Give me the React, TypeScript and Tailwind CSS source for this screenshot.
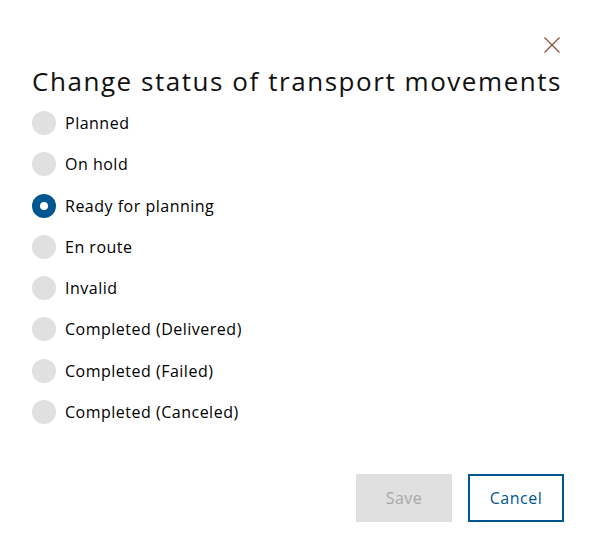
import React, { useState } from "react";

const statuses = [
  "Planned",
  "On hold",
  "Ready for planning",
  "En route",
  "Invalid",
  "Completed (Delivered)",
  "Completed (Failed)",
  "Completed (Canceled)",
];

export default function App() {
  const [selected, setSelected] = useState("Ready for planning");

  return (
    <div
      className="w-[596px] h-[556px] bg-white px-8 text-[#000000] flex flex-col"
      style={{ fontFamily: '"Open Sans", "Noto Sans", sans-serif' }}
    >
      {/* close button */}
      <div className="flex justify-end pt-[37px]">
        <button className="w-4 h-4 mr-[4px] flex items-center justify-center" aria-label="Close">
          <svg width="16" height="16" viewBox="0 0 16 16" fill="none">
            <path d="M0.5 0.5L15.5 15.5M15.5 0.5L0.5 15.5" stroke="#8b4c3a" strokeWidth="1.2" />
          </svg>
        </button>
      </div>

      <h1 className="mt-3 text-[26px] leading-8 font-normal tracking-[1.55px] whitespace-nowrap text-[#111]">
        Change status of transport movements
      </h1>

      {/* status options */}
      <div className="mt-[14px] flex flex-col gap-[17.3px]">
        {statuses.map((s) => {
          const active = s === selected;
          return (
            <label key={s} className="flex items-center gap-[9px] h-6 cursor-pointer" onClick={() => setSelected(s)}>
              <span
                className={
                  active
                    ? "w-6 h-6 rounded-full bg-[#005691] flex items-center justify-center"
                    : "w-6 h-6 rounded-full bg-[#e0e0e0]"
                }
              >
                {active && <span className="w-2 h-2 rounded-full bg-white" />}
              </span>
              <span className="text-base leading-6 tracking-[0.5px]">{s}</span>
            </label>
          );
        })}
      </div>

      {/* actions */}
      <div className="mt-[50px] flex justify-end gap-4">
        <button disabled className="w-24 h-12 bg-[#e0e0e0] text-[#a8a8a8] text-base tracking-[0.5px]">
          Save
        </button>
        <button className="w-24 h-12 border-2 border-[#005691] text-[#005691] text-base tracking-[0.5px]">
          Cancel
        </button>
      </div>
    </div>
  );
}
